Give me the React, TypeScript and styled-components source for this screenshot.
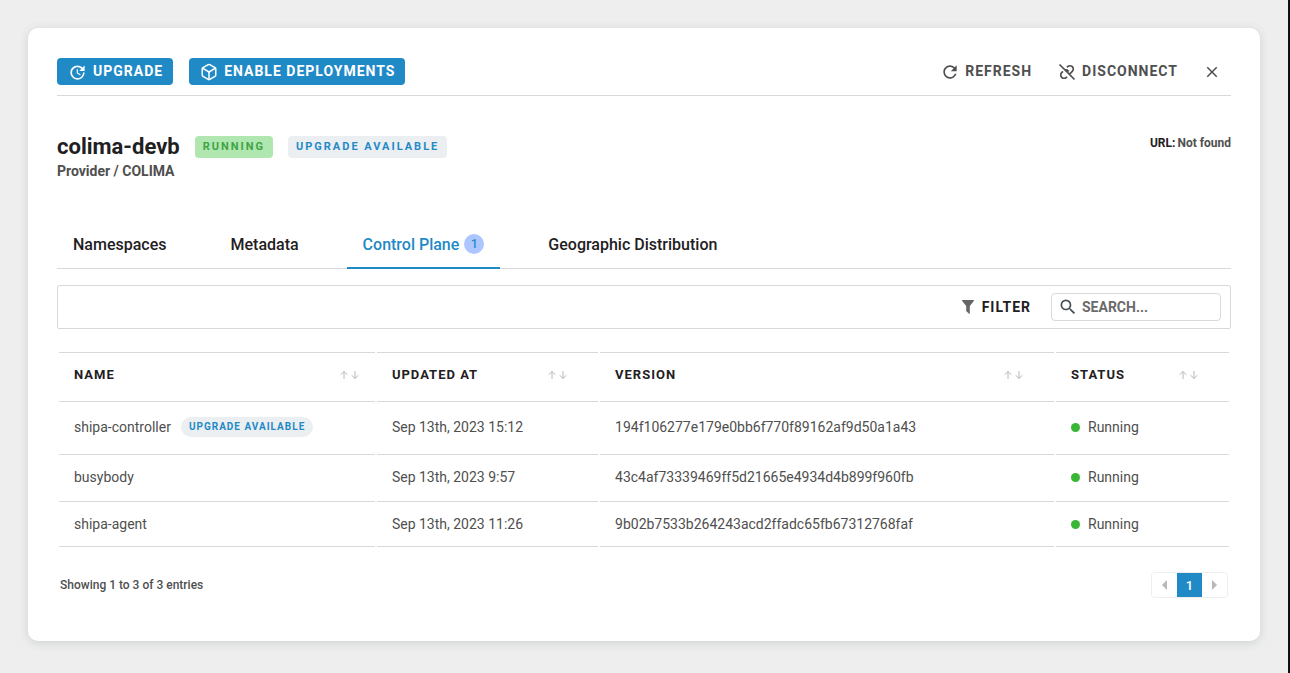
import React from "react";
import styled, { createGlobalStyle, css } from "styled-components";
import { MdUpdate, MdRefresh, MdClose, MdSearch } from "react-icons/md";
import { BiUnlink } from "react-icons/bi";
import { FiBox } from "react-icons/fi";

const color = {
  blue: "#1f8ac6",
  text: "#1f2022",
  muted: "#4f4f4f",
  line: "#d9d9d9",
  pale: "#ebeff2",
};

const GlobalStyle = createGlobalStyle`
  *, *::before, *::after { box-sizing: border-box; }
  body {
    margin: 0;
    background: #eeeeee;
    color: ${color.text};
    font-family: Roboto, "Liberation Sans", sans-serif;
    font-size: 14px;
  }
  button, input {
    font-family: inherit;
    margin: 0;
  }
  button {
    background: none;
    border: 0;
    padding: 0;
    cursor: pointer;
  }
`;

const Page = styled.div`
  min-height: 100vh;
  padding: 28px 28px 32px;
  border-right: 2px solid #0d1116;
`;

const Card = styled.main`
  padding: 30px 29px 43px;
  background: #ffffff;
  border-radius: 10px;
  box-shadow: 0 2px 10px rgba(60, 75, 85, 0.17);
`;

const ActionBar = styled.header`
  display: flex;
  align-items: center;
  justify-content: space-between;
  padding-bottom: 10px;
  border-bottom: 1px solid ${color.line};
`;

const ActionGroup = styled.div<{ $gap: number }>`
  display: flex;
  align-items: center;
  gap: ${(p) => p.$gap}px;
`;

const ActionButton = styled.button<{ $primary?: boolean }>`
  display: flex;
  align-items: center;
  gap: ${(p) => (p.$primary ? 6 : 5)}px;
  height: 27px;
  border-radius: 4px;
  color: ${color.muted};
  font-size: 14px;
  font-weight: 700;
  line-height: 27px;
  letter-spacing: 1px;
  svg { margin-top: 1px; }
  ${(p) =>
    p.$primary &&
    css`
      padding: 0 10px 0 11px;
      background: ${color.blue};
      color: #ffffff;
    `}
`;

const CloseButton = styled.button`
  display: flex;
  height: 27px;
  align-items: center;
  padding-right: 10px;
  color: ${color.muted};
  svg { margin-top: 1px; }
`;

const Summary = styled.section`
  display: flex;
  justify-content: space-between;
  margin-top: 38px;
`;

const TitleRow = styled.div`
  display: flex;
  align-items: center;
  gap: 15px;
`;

const Title = styled.h1`
  margin: 0;
  font-size: 22px;
  font-weight: 700;
  line-height: 26px;
`;

const Provider = styled.p`
  margin: 2px 0 0;
  color: ${color.muted};
  font-size: 14px;
  font-weight: 700;
  line-height: 18px;
`;

const Tag = styled.span<{ $green?: boolean }>`
  padding: 0 8px;
  border-radius: 4px;
  background: ${(p) => (p.$green ? "#b0e6b0" : color.pale)};
  color: ${(p) => (p.$green ? "#3fa447" : color.blue)};
  font-size: 11px;
  font-weight: 700;
  line-height: 22px;
  letter-spacing: 2px;
`;

const Url = styled.p`
  display: flex;
  gap: 2px;
  margin: 1px 0 0;
  font-size: 12px;
  font-weight: 700;
  line-height: 16px;
  span { color: ${color.muted}; }
`;

const Tabs = styled.nav`
  display: flex;
  gap: 32px;
  margin-top: 41px;
  border-bottom: 1px solid ${color.line};
`;

const Tab = styled.button<{ $active?: boolean }>`
  display: flex;
  align-items: center;
  gap: 5px;
  height: 48px;
  margin-bottom: -1px;
  padding: 0 16px;
  border-bottom: 2px solid ${(p) => (p.$active ? color.blue : "transparent")};
  color: ${(p) => (p.$active ? color.blue : color.text)};
  font-size: 16px;
  font-weight: 500;
`;

const Count = styled.span`
  width: 20px;
  height: 20px;
  border-radius: 50%;
  background: #adc6ff;
  font-size: 12px;
  line-height: 20px;
  text-align: center;
`;

const Toolbar = styled.div`
  display: flex;
  align-items: center;
  justify-content: flex-end;
  gap: 20px;
  height: 44px;
  margin-top: 16px;
  padding: 0 9px;
  border: 1px solid ${color.line};
  border-radius: 2px;
`;

const FilterButton = styled.button`
  display: flex;
  align-items: center;
  gap: 8px;
  color: ${color.text};
  font-size: 14px;
  font-weight: 700;
  letter-spacing: 1px;
  svg { color: #666666; }
`;

const SearchBox = styled.label`
  display: flex;
  align-items: center;
  gap: 4px;
  width: 170px;
  height: 28px;
  padding: 0 6px;
  border: 1px solid ${color.line};
  border-radius: 4px;
  color: #464f55;
`;

const SearchInput = styled.input`
  flex: 1;
  min-width: 0;
  padding: 0;
  border: 0;
  outline: 0;
  background: transparent;
  font-size: 14px;
  font-weight: 700;
  &::placeholder { color: #6b6b6b; opacity: 1; }
`;

const Table = styled.table`
  width: 100%;
  margin-top: 23px;
  border-collapse: separate;
  border-spacing: 2px 0;
  table-layout: fixed;
`;

const HeadCell = styled.th`
  height: 50px;
  padding: 0 31px 5px 15px;
  border-top: 1px solid ${color.line};
  border-bottom: 1px solid ${color.line};
  font-size: 13px;
  font-weight: 700;
  letter-spacing: 1px;
  text-align: left;
  &:first-child { padding-right: 16px; }
`;

const HeadContent = styled.div`
  display: flex;
  align-items: center;
  justify-content: space-between;
`;

const SortButton = styled.button`
  display: flex;
  gap: 3px;
  color: #b8b8b8;
`;

const Row = styled.tr<{ $tall?: boolean }>`
  height: ${(p) => (p.$tall ? 53 : 47)}px;
  &:last-child { height: 45px; }
`;

const Cell = styled.td`
  padding: 0 15px 2px;
  border-bottom: 1px solid ${color.line};
  color: ${color.muted};
  font-size: 14px;
  tr:last-child > & { padding-bottom: 0; }
`;

const CellContent = styled.div<{ $gap: number }>`
  display: flex;
  align-items: center;
  gap: ${(p) => p.$gap}px;
`;

const Pill = styled.span`
  padding: 0 8px;
  border-radius: 10px;
  background: ${color.pale};
  color: ${color.blue};
  font-size: 10px;
  font-weight: 700;
  line-height: 20px;
  letter-spacing: 1px;
`;

const Dot = styled.span`
  width: 9px;
  height: 9px;
  border-radius: 50%;
  background: #38b635;
`;

const Footer = styled.footer`
  display: flex;
  align-items: center;
  justify-content: space-between;
  margin-top: 25px;
  padding: 0 3px;
  color: ${color.muted};
  font-size: 12px;
  font-weight: 500;
  line-height: 16px;
`;

const Pager = styled.div`
  display: flex;
  overflow: hidden;
  border: 1px solid #eeeeee;
  border-radius: 4px;
`;

const PageButton = styled.button<{ $current?: boolean }>`
  display: flex;
  align-items: center;
  justify-content: center;
  width: 25px;
  height: 24px;
  background: ${(p) => (p.$current ? color.blue : "#ffffff")};
  color: ${(p) => (p.$current ? "#ffffff" : "#b8b8b8")};
  font-size: 13px;
  font-weight: 500;
`;

const columns = [
  { label: "NAME" },
  { label: "UPDATED AT", width: "19%" },
  { label: "VERSION", width: "39%" },
  { label: "STATUS", width: "173" },
];

const rows = [
  { name: "shipa-controller", upgrade: true, updated: "Sep 13th, 2023 15:12", version: "194f106277e179e0bb6f770f89162af9d50a1a43" },
  { name: "busybody", upgrade: false, updated: "Sep 13th, 2023 9:57", version: "43c4af73339469ff5d21665e4934d4b899f960fb" },
  { name: "shipa-agent", upgrade: false, updated: "Sep 13th, 2023 11:26", version: "9b02b7533b264243acd2ffadc65fb67312768faf" },
];

const FunnelIcon = () => (
  <svg width="12" height="14" viewBox="0 0 12 14" fill="currentColor" aria-hidden="true">
    <path d="M0.4 0h11.2q.6.3.2.9L7.8 6v7.4q-.2.6-.7.3L4.6 11.6q-.4-.3-.4-.8V6L.2.9Q-.2.3.4 0z" />
  </svg>
);

const SortIcon = ({ down }: { down?: boolean }) => (
  <svg width="8" height="8" viewBox="0 0 8 8" fill="none" stroke="currentColor" aria-hidden="true">
    <path d={down ? "M4 0v7.4M0.6 4.2L4 7.5l3.4-3.3" : "M4 8V0.6M0.6 3.8L4 0.5l3.4 3.3"} />
  </svg>
);

const Caret = ({ right }: { right?: boolean }) => (
  <svg width="5" height="10" viewBox="0 0 5 10" fill="currentColor" aria-hidden="true">
    <path d={right ? "M0 0l5 5-5 5z" : "M5 0L0 5l5 5z"} />
  </svg>
);

export default function App() {
  return (
    <>
      <GlobalStyle />
      <Page>
        <Card>
          <ActionBar>
            <ActionGroup $gap={16}>
              <ActionButton $primary><MdUpdate size={19} />UPGRADE</ActionButton>
              <ActionButton $primary><FiBox size={18} />ENABLE DEPLOYMENTS</ActionButton>
            </ActionGroup>
            <ActionGroup $gap={25}>
              <ActionButton><MdRefresh size={20} />REFRESH</ActionButton>
              <ActionButton><BiUnlink size={20} />DISCONNECT</ActionButton>
              <CloseButton aria-label="Close"><MdClose size={18} /></CloseButton>
            </ActionGroup>
          </ActionBar>

          <Summary>
            <div>
              <TitleRow>
                <Title>colima-devb</Title>
                <Tag $green>RUNNING</Tag>
                <Tag>UPGRADE AVAILABLE</Tag>
              </TitleRow>
              <Provider>Provider / COLIMA</Provider>
            </div>
            <Url>URL: <span>Not found</span></Url>
          </Summary>

          <Tabs>
            <Tab>Namespaces</Tab>
            <Tab>Metadata</Tab>
            <Tab $active>Control Plane<Count>1</Count></Tab>
            <Tab>Geographic Distribution</Tab>
          </Tabs>

          <Toolbar>
            <FilterButton><FunnelIcon />FILTER</FilterButton>
            <SearchBox>
              <MdSearch size={20} />
              <SearchInput type="text" placeholder="SEARCH..." aria-label="Search" />
            </SearchBox>
          </Toolbar>

          <Table>
            <colgroup>
              {columns.map((c) => <col key={c.label} width={c.width} />)}
            </colgroup>
            <thead>
              <tr>
                {columns.map((c) => (
                  <HeadCell key={c.label}>
                    <HeadContent>
                      {c.label}
                      <SortButton aria-label={`Sort by ${c.label}`}><SortIcon /><SortIcon down /></SortButton>
                    </HeadContent>
                  </HeadCell>
                ))}
              </tr>
            </thead>
            <tbody>
              {rows.map((r) => (
                <Row key={r.name} $tall={r.upgrade}>
                  <Cell>
                    <CellContent $gap={10}>{r.name}{r.upgrade && <Pill>UPGRADE AVAILABLE</Pill>}</CellContent>
                  </Cell>
                  <Cell>{r.updated}</Cell>
                  <Cell>{r.version}</Cell>
                  <Cell><CellContent $gap={8}><Dot />Running</CellContent></Cell>
                </Row>
              ))}
            </tbody>
          </Table>

          <Footer>
            <span>Showing 1 to 3 of 3 entries</span>
            <Pager>
              <PageButton aria-label="Previous page"><Caret /></PageButton>
              <PageButton $current>1</PageButton>
              <PageButton aria-label="Next page"><Caret right /></PageButton>
            </Pager>
          </Footer>
        </Card>
      </Page>
    </>
  );
}
